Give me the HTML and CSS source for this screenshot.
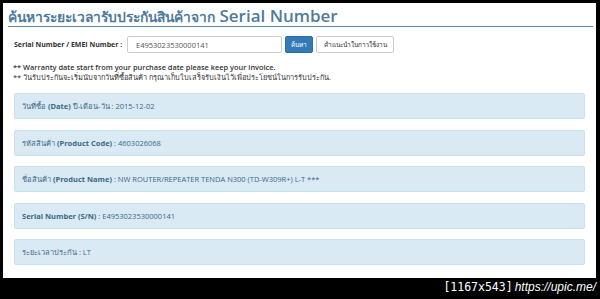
FILE: index.html
```html
<!DOCTYPE html>
<html lang="th">
<head>
    <meta charset="UTF-8">
    <title>Warranty Check</title>
    <link rel="stylesheet" href="styles.css">
</head>
<body>
    <div class="page">
        <h1><span class="th">ค้นหาระยะเวลารับประกันสินค้าจาก</span> Serial Number</h1>
        <div class="search-row">
            <label for="serial">Serial Number / EMEI Number :</label>
            <input type="text" id="serial" value="E4953023530000141">
            <button class="btn btn-primary">ค้นหา</button>
            <button class="btn btn-default">คำแนะนำในการใช้งาน</button>
        </div>
        <div class="notes">
            <div class="note-en">** Warranty date start from your purchase date please keep your invoice.</div>
            <div class="note-th">** วันรับประกันจะเริ่มนับจากวันที่ซื้อสินค้า กรุณาเก็บใบเสร็จรับเงินไว้เพื่อประโยชน์ในการรับประกัน.</div>
        </div>
        <div class="results">
            <div class="info">วันที่ซื้อ <b>(Date)</b> ปี-เดือน-วัน : 2015-12-02</div>
            <div class="info">รหัสสินค้า <b>(Product Code)</b> : 4603026068</div>
            <div class="info">ชื่อสินค้า <b>(Product Name)</b> : NW ROUTER/REPEATER TENDA N300 (TD-W309R+) L-T ***</div>
            <div class="info"><b>Serial Number (S/N)</b> : E4953023530000141</div>
            <div class="info">ระยะเวลาประกัน : LT</div>
        </div>
    </div>
    <div class="watermark">[1167x543]<span class="url">https://upic.me/</span></div>
</body>
</html>
```

FILE: styles.css
```css
body {
    margin: 0;
    background-color: #000;
    font-family: 'Open Sans', 'Noto Sans', sans-serif;
    color: #333;
}
.page {
    background-color: #fff;
    margin: 3px 4px 0 3px;
    height: 275px;
    overflow: hidden;
}
h1 {
    margin: 0 3px 0 5px;
    padding-top: 2px;
    height: 21px;
    font-size: 17px;
    line-height: 21px;
    font-weight: 600;
    color: #4f7b9b;
    border-bottom: 1px solid #5d86a5;
    white-space: nowrap;
}
h1 .th {
    font-size: 13.8px;
}
.search-row {
    display: flex;
    align-items: center;
    margin: 9px 0 0 11px;
    height: 17px;
}
.search-row label {
    flex: none;
    width: 113px;
    font-size: 7px;
    font-weight: bold;
    color: #333;
    white-space: nowrap;
}
.search-row input {
    width: 155px;
    height: 17px;
    box-sizing: border-box;
    border: 1px solid #ccc;
    border-radius: 2px;
    padding: 0 8px;
    font-family: inherit;
    font-size: 7.5px;
    color: #555;
}
.btn {
    height: 17px;
    margin-left: 3px;
    padding: 0 5px;
    font-family: inherit;
    font-size: 6.5px;
    border-radius: 2px;
    border: 1px solid #ccc;
    white-space: nowrap;
}
.btn-primary {
    background-color: #337ab7;
    border-color: #2e6da4;
    color: #fff;
    width: 28px;
}
.btn-default {
    background-color: #fff;
    color: #333;
    width: 78px;
}
.notes {
    margin: 9px 0 0 10px;
}
.note-en {
    font-size: 7.4px;
    font-weight: 600;
    line-height: 11px;
}
.note-th {
    font-size: 7.4px;
    line-height: 9px;
}
.results {
    display: flex;
    flex-direction: column;
    gap: 10.5px;
    margin: 11px 11px 0 11px;
}
.info {
    height: 26px;
    box-sizing: border-box;
    padding: 0 7px;
    line-height: 24px;
    background-color: #d9eaf5;
    border: 1px solid #c9e1ef;
    border-radius: 2px;
    font-size: 7.5px;
    color: #3a6884;
    white-space: nowrap;
}
.watermark {
    text-align: right;
    padding-right: 4px;
    color: #fff;
    font-family: 'DejaVu Sans Mono', monospace;
    font-size: 11.5px;
    line-height: 18px;
}
.watermark .url {
    margin-left: 2px;
    font-family: 'Liberation Sans', sans-serif;
    font-style: italic;
    font-size: 12px;
}
```
